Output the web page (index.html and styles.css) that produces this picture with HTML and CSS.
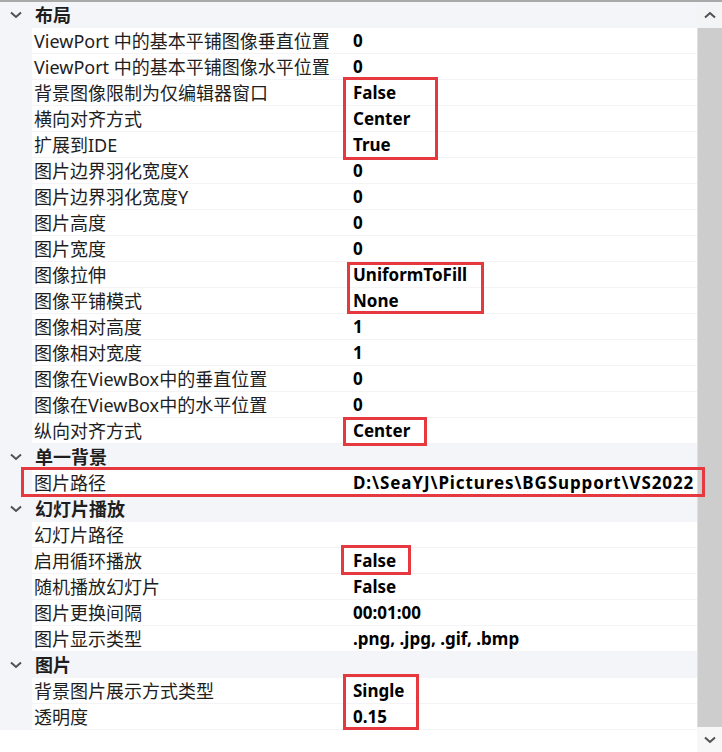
FILE: index.html
```html
<!DOCTYPE html>
<html lang="zh-CN">
<head>
<meta charset="utf-8">
<title>属性</title>
<link rel="stylesheet" href="styles.css">
</head>
<body>
<div class="panel">
  <div class="topline"></div>
  <div class="body">
    <div class="grid">
      <div class="cat"><span class="gut"><svg class="chev" viewBox="0 0 12 8"><path d="M1 1.5 L6 6 L11 1.5"/></svg></span><span class="cat-name">布局</span></div>
      <div class="row"><span class="gut"></span><span class="name">ViewPort 中的基本平铺图像垂直位置</span><span class="val">0</span></div>
      <div class="row"><span class="gut"></span><span class="name">ViewPort 中的基本平铺图像水平位置</span><span class="val">0</span></div>
      <div class="row"><span class="gut"></span><span class="name">背景图像限制为仅编辑器窗口</span><span class="val">False</span></div>
      <div class="row"><span class="gut"></span><span class="name">横向对齐方式</span><span class="val">Center</span></div>
      <div class="row"><span class="gut"></span><span class="name">扩展到IDE</span><span class="val">True</span></div>
      <div class="row"><span class="gut"></span><span class="name">图片边界羽化宽度X</span><span class="val">0</span></div>
      <div class="row"><span class="gut"></span><span class="name">图片边界羽化宽度Y</span><span class="val">0</span></div>
      <div class="row"><span class="gut"></span><span class="name">图片高度</span><span class="val">0</span></div>
      <div class="row"><span class="gut"></span><span class="name">图片宽度</span><span class="val">0</span></div>
      <div class="row"><span class="gut"></span><span class="name">图像拉伸</span><span class="val">UniformToFill</span></div>
      <div class="row"><span class="gut"></span><span class="name">图像平铺模式</span><span class="val">None</span></div>
      <div class="row"><span class="gut"></span><span class="name">图像相对高度</span><span class="val">1</span></div>
      <div class="row"><span class="gut"></span><span class="name">图像相对宽度</span><span class="val">1</span></div>
      <div class="row"><span class="gut"></span><span class="name">图像在ViewBox中的垂直位置</span><span class="val">0</span></div>
      <div class="row"><span class="gut"></span><span class="name">图像在ViewBox中的水平位置</span><span class="val">0</span></div>
      <div class="row"><span class="gut"></span><span class="name">纵向对齐方式</span><span class="val">Center</span></div>

      <div class="cat"><span class="gut"><svg class="chev" viewBox="0 0 12 8"><path d="M1 1.5 L6 6 L11 1.5"/></svg></span><span class="cat-name">单一背景</span></div>
      <div class="row"><span class="gut"></span><span class="name">图片路径</span><span class="val path">D:\SeaYJ\Pictures\BGSupport\VS2022</span></div>

      <div class="cat"><span class="gut"><svg class="chev" viewBox="0 0 12 8"><path d="M1 1.5 L6 6 L11 1.5"/></svg></span><span class="cat-name">幻灯片播放</span></div>
      <div class="row"><span class="gut"></span><span class="name">幻灯片路径</span><span class="val"></span></div>
      <div class="row"><span class="gut"></span><span class="name">启用循环播放</span><span class="val">False</span></div>
      <div class="row"><span class="gut"></span><span class="name">随机播放幻灯片</span><span class="val">False</span></div>
      <div class="row"><span class="gut"></span><span class="name">图片更换间隔</span><span class="val">00:01:00</span></div>
      <div class="row"><span class="gut"></span><span class="name">图片显示类型</span><span class="val">.png, .jpg, .gif, .bmp</span></div>

      <div class="cat"><span class="gut"><svg class="chev" viewBox="0 0 12 8"><path d="M1 1.5 L6 6 L11 1.5"/></svg></span><span class="cat-name">图片</span></div>
      <div class="row"><span class="gut"></span><span class="name">背景图片展示方式类型</span><span class="val">Single</span></div>
      <div class="row"><span class="gut"></span><span class="name">透明度</span><span class="val">0.15</span></div>
    </div>
    <div class="scrollbar">
      <div class="sb-btn up"><svg viewBox="0 0 12 8"><path d="M1 6.5 L6 2 L11 6.5"/></svg></div>
      <div class="thumb"></div>
      <div class="sb-btn down"><svg viewBox="0 0 12 8"><path d="M1 1.5 L6 6 L11 1.5"/></svg></div>
    </div>
  </div>
  <div class="mark m1"></div>
  <div class="mark m2"></div>
  <div class="mark m3"></div>
  <div class="mark m4"></div>
  <div class="mark m5"></div>
  <div class="mark m6"></div>
</div>
</body>
</html>
```
FILE: styles.css
```css
html, body {
  margin: 0;
  padding: 0;
  background: #ffffff;
}
body {
  font-family: "Noto Sans", "Noto Sans CJK SC", sans-serif;
  font-size: 18px;
  color: #1e1e1e;
}
.panel {
  position: relative;
  width: 722px;
  height: 752px;
  overflow: hidden;
  background: #ffffff;
}
.topline {
  height: 2px;
  background: #a9a9a9;
}
.body {
  display: flex;
  height: 750px;
}
.grid {
  flex: 1;
  min-width: 0;
  display: flex;
  flex-direction: column;
}
.cat, .row {
  display: flex;
  height: 26px;
  line-height: 26px;
  white-space: nowrap;
}
.cat {
  background: #f4f5f8;
}
.row {
  box-shadow: inset 0 -1px 0 #f4f4f6;
}
.gut {
  width: 32px;
  flex: none;
  display: flex;
  align-items: center;
  justify-content: center;
  background: #f4f5f8;
}
.chev {
  width: 12px;
  height: 8px;
  margin-left: -1px;
  margin-top: -1px;
}
.chev path, .sb-btn path {
  fill: none;
  stroke: #505050;
  stroke-width: 2;
}
.cat-name {
  padding-left: 3px;
  font-weight: bold;
}
.name {
  width: 311px;
  flex: none;
  padding-left: 2px;
  overflow: hidden;
}
.val {
  flex: 1;
  min-width: 0;
  padding-left: 8px;
  font-size: 17px;
  font-weight: bold;
  color: #000000;
  overflow: hidden;
}
.path {
  letter-spacing: 0.9px;
}
.scrollbar {
  width: 25px;
  flex: none;
  display: flex;
  flex-direction: column;
  background: #f0f0f0;
}
.sb-btn {
  height: 26px;
  flex: none;
  display: flex;
  align-items: center;
  justify-content: center;
  background: #f3f4f6;
}
.sb-btn svg {
  width: 12px;
  height: 8px;
}
.sb-btn.down {
  height: 25px;
  background: #f7f7f7;
}
.thumb {
  flex: 1;
  background: #cdcdcd;
  border-left: 1px solid #e0e0e0;
}
.mark {
  position: absolute;
  border: 3px solid #e5383f;
  box-sizing: border-box;
}
.m1 { left: 343px; top: 77px;  width: 95px;  height: 83px; }
.m2 { left: 347px; top: 262px; width: 137px; height: 52px; }
.m3 { left: 343px; top: 417px; width: 84px;  height: 29px; }
.m4 { left: 21px;  top: 467px; width: 684px; height: 30px; }
.m5 { left: 341px; top: 545px; width: 70px;  height: 30px; }
.m6 { left: 343px; top: 674px; width: 76px;  height: 56px; }
```
